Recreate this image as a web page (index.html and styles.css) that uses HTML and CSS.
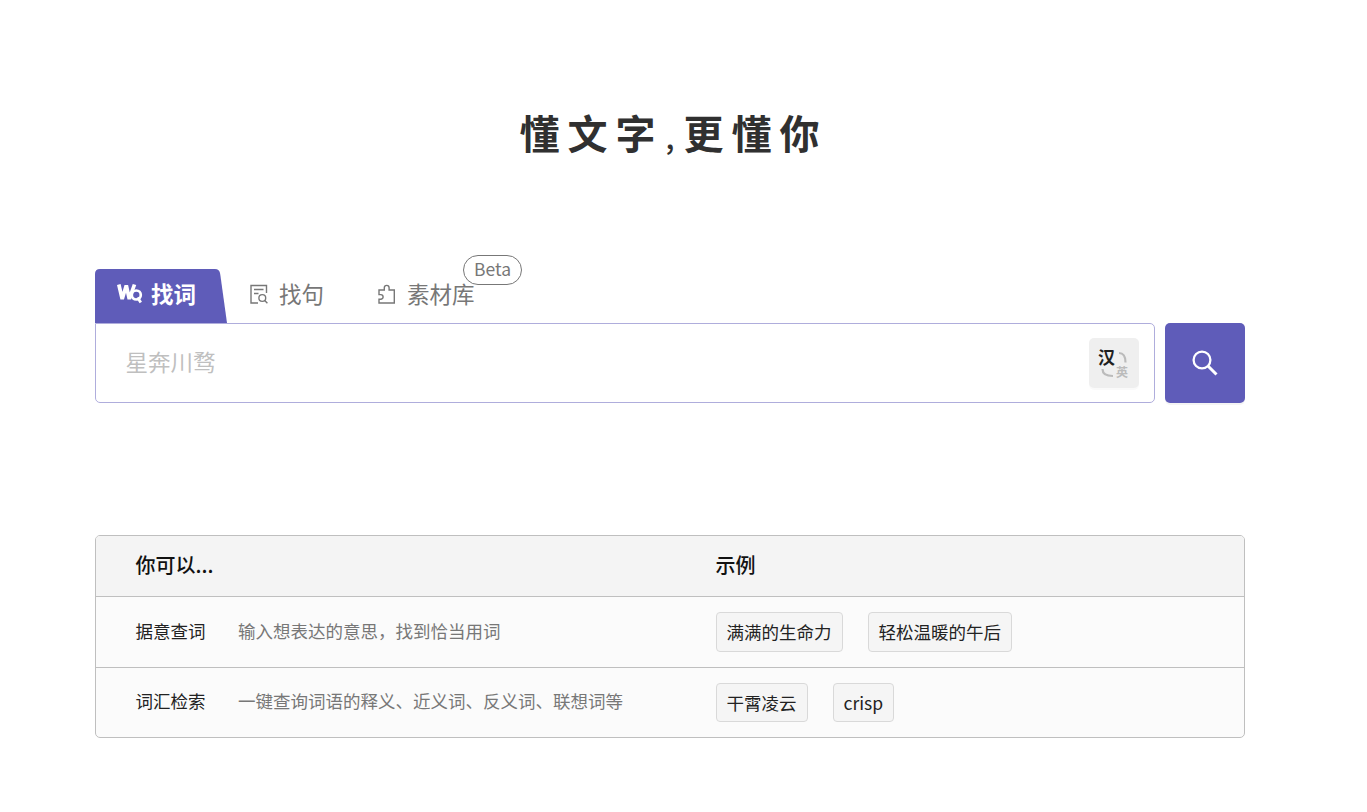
FILE: index.html
```html
<!DOCTYPE html>
<html lang="zh-CN">
<head>
    <meta charset="UTF-8">
    <meta name="viewport" content="width=device-width, initial-scale=1.0">
    <title>懂文字,更懂你</title>
    <link rel="stylesheet" href="styles.css">
</head>
<body>
    <main class="container">
        <!-- 标语 -->
        <h1 class="slogan">懂文字<span class="comma">,</span>更懂你</h1>

        <!-- 标签栏 -->
        <nav class="tabs">
            <a class="tab active">
                <svg class="tab-bg" viewBox="0 0 132 54"><path d="M0 54V5q0-5 5-5h115q4.500 0 5.200 5L132 54z" fill="#5f5cb9"/></svg>
                <svg class="logo" viewBox="0 0 26 22" fill="none" stroke="#fff">
                    <path d="M1.800 1.500l3.400 14.500L9.300 2.500l3 13.500L17.500 1.500" stroke-width="3.700" stroke-linejoin="bevel"/>
                    <circle cx="19.300" cy="12" r="4.500" stroke-width="2.700"/>
                    <path d="M20.500 14.500l3.300 5" stroke-width="2.800"/>
                </svg>
                <span class="label">找词</span>
            </a>
            <a class="tab">
                <svg class="icon" viewBox="0 0 20 20" fill="none" stroke="#777" stroke-width="1.400">
                    <path d="M9 19H2V1.500h15.500V9M5 5.500h9.500M5 9.500h4.500"/>
                    <circle cx="13.300" cy="14" r="3.400"/>
                    <path d="M15.700 16.500l2.700 2.700"/>
                </svg>
                <span class="label">找句</span>
            </a>
            <a class="tab">
                <svg class="icon" viewBox="0 0 20 20" fill="none" stroke="#777" stroke-width="1.400">
                    <path d="M2 6h5.300V3.800a2.400 2.400 0 0 1 4.800 0V6h5.200v13H2v-3.800h1.800a2.300 2.300 0 0 0 0-4.600H2z"/>
                </svg>
                <span class="label">素材库</span>
                <span class="beta">Beta</span>
            </a>
        </nav>

        <!-- 搜索框 -->
        <div class="search">
            <div class="search-box">
                <input class="search-input" type="text" placeholder="星奔川骛">
                <button class="lang">
                    <span class="lang-zh">汉</span>
                    <svg class="lang-arc" viewBox="0 0 50 50" fill="none" stroke="#bbb" stroke-width="2.200">
                        <path d="M30 15q6.500 0 6.500 9.500M13.500 31q0 7 10.500 7"/>
                    </svg>
                    <span class="lang-en">英</span>
                </button>
            </div>
            <button class="search-button">
                <svg viewBox="0 0 26 26" fill="none" stroke="#fff" stroke-width="2.300"><circle cx="10" cy="10" r="8.400"/><path d="M16 16l8.500 8.500" stroke-width="3"/></svg>
            </button>
        </div>

        <!-- 功能说明 -->
        <section class="guide">
            <div class="guide-row guide-head">
                <div class="guide-left">你可以...</div>
                <div>示例</div>
            </div>
            <div class="guide-row">
                <div class="guide-left"><span class="name">据意查词</span><span class="desc">输入想表达的意思，找到恰当用词</span></div>
                <div class="examples"><a class="example">满满的生命力</a><a class="example">轻松温暖的午后</a></div>
            </div>
            <div class="guide-row">
                <div class="guide-left"><span class="name">词汇检索</span><span class="desc">一键查询词语的释义、近义词、反义词、联想词等</span></div>
                <div class="examples"><a class="example">干霄凌云</a><a class="example">crisp</a></div>
            </div>
        </section>
    </main>
</body>
</html>
```
FILE: styles.css
```css
* {
    margin: 0;
    padding: 0;
    box-sizing: border-box;
}

body {
    font-family: "Noto Sans CJK SC", sans-serif;
    background-color: #fff;
    color: #222;
}

.container {
    width: 1150px;
    margin-left: 95px;
    padding-top: 102px;
}

/* 标语 */
.slogan {
    height: 60px;
    padding-left: 424.5px;
    line-height: 60px;
    font-size: 40px;
    font-weight: 700;
    letter-spacing: 8px;
    white-space: nowrap;
    color: #303030;
}

.comma {
    display: inline-block;
    width: 20px;
    padding-left: 2px;
    font-size: 30px;
    line-height: 40px;
    font-weight: 500;
}

/* 标签栏 */
.tabs {
    display: flex;
    height: 54px;
    margin-top: 107px;
    color: #777;
}

.tab {
    position: relative;
    display: flex;
    align-items: center;
    height: 54px;
    padding: 0 31px 3px 22px;
    font-size: 22.5px;
    line-height: 32px;
    white-space: nowrap;
}

.tab .label {
    padding-bottom: 4px;
}

.tab.active {
    width: 132px;
    padding-right: 0;
    color: #fff;
    font-weight: 700;
}

.tab-bg {
    position: absolute;
    top: 0;
    left: 0;
    width: 132px;
    height: 54px;
}

.logo,
.tab .label {
    position: relative;
}

.logo {
    width: 26px;
    height: 22px;
    margin-right: 8px;
    margin-bottom: 1px;
}

.icon {
    width: 20px;
    height: 20px;
    margin-right: 10px;
    margin-bottom: 1px;
}

.beta {
    position: absolute;
    top: -14px;
    left: 108px;
    width: 59px;
    height: 30px;
    border: 1px solid #777;
    border-radius: 15px;
    background-color: #fff;
    font-size: 17.5px;
    line-height: 26px;
    text-align: center;
}

/* 搜索框 */
.search {
    display: flex;
    gap: 10px;
    height: 80px;
}

.search-box {
    display: flex;
    align-items: center;
    width: 1060px;
    padding: 0 15px 0 29.5px;
    border: 1px solid #afaddc;
    border-radius: 0 5px 5px 5px;
}

.search-input {
    flex: 1;
    height: 60px;
    padding-bottom: 4px;
    border: none;
    outline: none;
    font-family: inherit;
    font-size: 22.5px;
}

.search-input::placeholder {
    color: #bfbfbf;
}

.lang {
    position: relative;
    width: 50px;
    height: 50px;
    border: none;
    border-radius: 5px;
    background-color: #efefef;
    box-shadow: 0 2px 0 rgba(0, 0, 0, 0.02);
    font-family: inherit;
}

.lang-zh,
.lang-en,
.lang-arc {
    position: absolute;
}

.lang-zh {
    top: 7px;
    left: 9px;
    font-size: 17px;
    font-weight: 700;
    line-height: 24px;
    color: #1f1f1f;
}

.lang-en {
    top: 25px;
    left: 27px;
    font-size: 12px;
    font-weight: 700;
    line-height: 18px;
    color: #bbb;
}

.lang-arc {
    top: 0;
    left: 0;
    width: 50px;
    height: 50px;
}

.search-button {
    display: flex;
    align-items: center;
    justify-content: center;
    width: 80px;
    border: none;
    border-radius: 5px;
    background-color: #5f5cb9;
    box-shadow: 0 2px 0 rgba(0, 0, 0, 0.045);
}

.search-button svg {
    width: 26px;
    height: 26px;
}

/* 功能说明 */
.guide {
    margin-top: 132px;
    border: 1px solid #bfbfbf;
    border-radius: 5px;
    background-color: #fbfbfb;
    overflow: hidden;
}

.guide-row {
    display: flex;
    align-items: center;
    height: 70px;
    padding-left: 39.5px;
    font-size: 17.5px;
}

.guide-row + .guide-row {
    height: 71px;
    border-top: 1px solid #bfbfbf;
}

.guide-row:last-child {
    height: 70px;
}

.guide-head {
    height: 60px;
    padding-bottom: 4px;
    background-color: #f4f4f4;
    font-size: 20px;
    font-weight: 500;
    color: #111;
}

.guide-left {
    width: 580px;
}

.guide-row + .guide-row .guide-left {
    padding-bottom: 4px;
}

.name {
    margin-right: 32.5px;
}

.desc {
    color: #777;
}

.examples {
    display: flex;
    gap: 25px;
}

.example {
    height: 40px;
    padding: 0 10px;
    border: 1px solid #d9d9d9;
    border-radius: 4px;
    background-color: #f5f5f5;
    line-height: 38px;
}

.guide-row:last-child .example {
    height: 39px;
}
```
